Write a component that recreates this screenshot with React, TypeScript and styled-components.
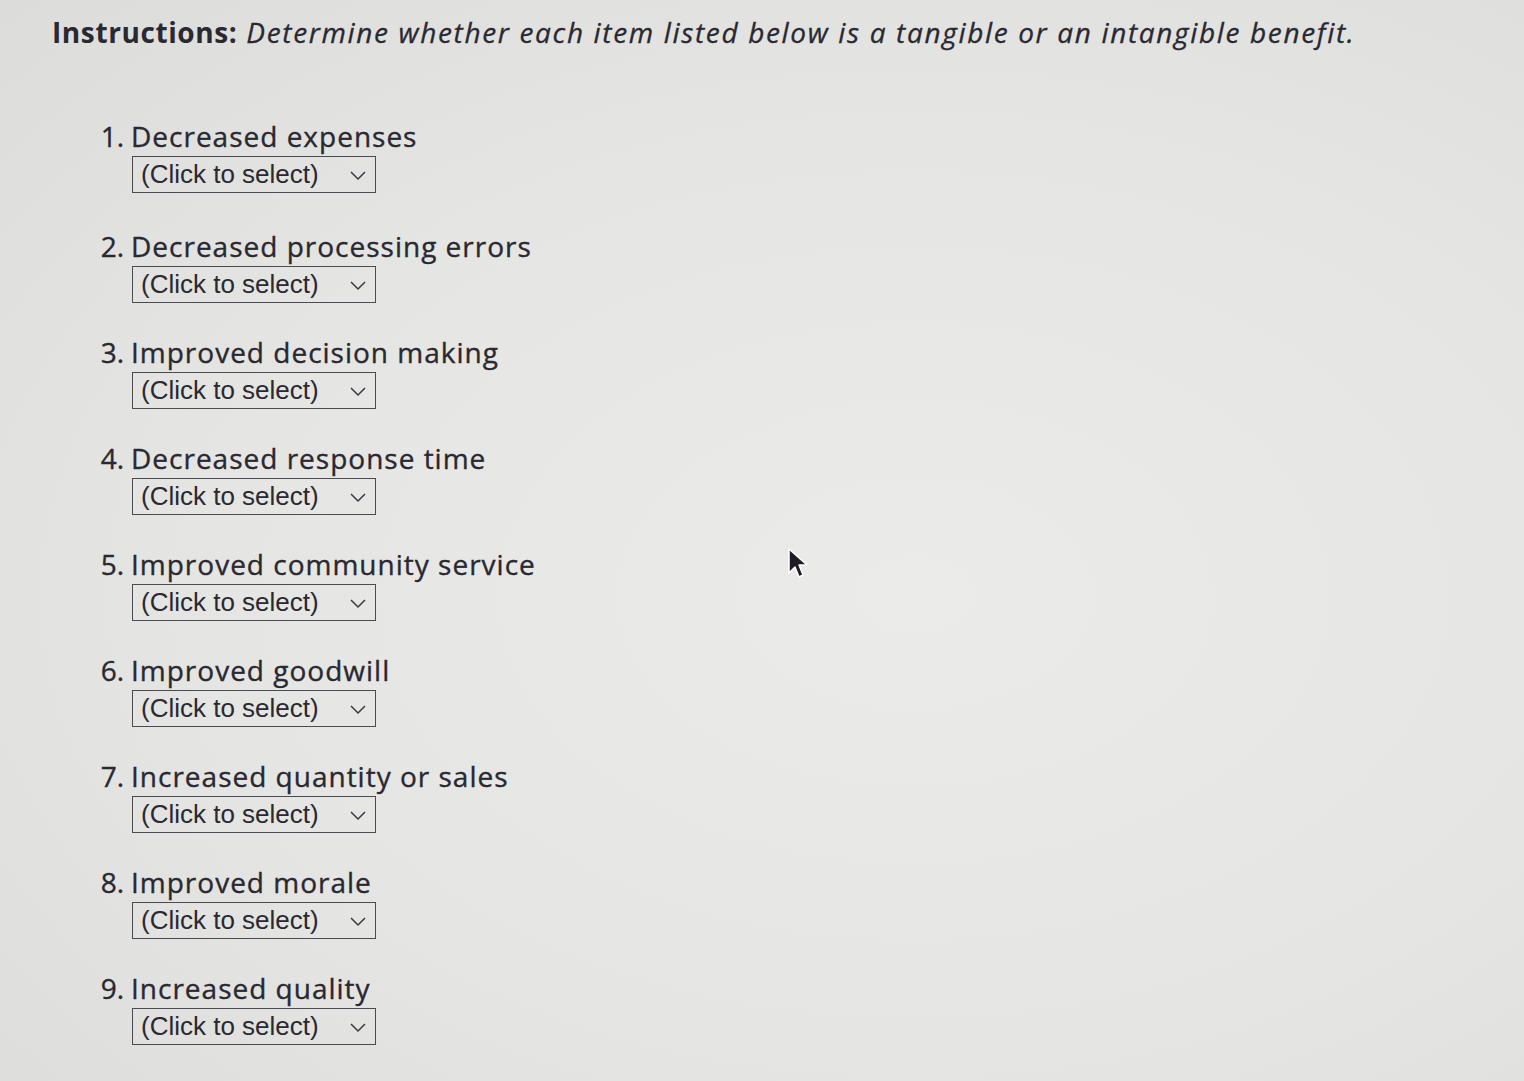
import styled, { createGlobalStyle } from "styled-components";

const GlobalStyle = createGlobalStyle`
    html, body {
        margin: 0;
        padding: 0;
    }
    body {
        background: #e4e4e2;
        font-family: "Open Sans", Lato, sans-serif;
        color: #2a2830;
    }
`;

const Page = styled.div`
    position: relative;
    width: 1524px;
    height: 1081px;
    box-sizing: border-box;
    padding: 15px 0 0 52px;
    background: radial-gradient(ellipse at 60% 55%, #ebebe9 0%, #e5e5e3 55%, #dcdcda 100%);
    overflow: hidden;
`;

const Title = styled.h1`
    margin: 0;
    font-size: 28px;
    line-height: 34px;
    font-weight: 400;
    white-space: nowrap;
    letter-spacing: 1.65px;
    -webkit-text-stroke: 0.3px #2a2830;
    b {
        font-weight: 700;
        letter-spacing: 0.6px;
        -webkit-text-stroke: 0;
    }
    i {
        font-style: italic;
    }
`;

const List = styled.ol`
    list-style: none;
    margin: 70px 0 0 0;
    padding: 0;
    display: flex;
    flex-direction: column;
    gap: 32px;
`;

const Item = styled.li`
    display: flex;
    flex-direction: column;
    gap: 3px;
    &:first-child {
        margin-bottom: 4px;
    }
`;

const Label = styled.div`
    display: flex;
    font-size: 28px;
    line-height: 34px;
    letter-spacing: 1px;
    -webkit-text-stroke: 0.35px #2a2830;
`;

const Num = styled.span`
    width: 79px;
    padding-right: 7px;
    box-sizing: border-box;
    text-align: right;
    letter-spacing: 0;
`;

const SelectBox = styled.div`
    margin-left: 80px;
    width: 244px;
    height: 37px;
    box-sizing: border-box;
    border: 1.5px solid #4d4b52;
    display: flex;
    align-items: center;
    justify-content: space-between;
    padding: 0 8px 0 8px;
    font-family: "Liberation Sans", Arial, sans-serif;
    font-size: 26px;
    color: #2a2830;
    cursor: pointer;
`;

const Chevron = styled.svg`
    width: 18px;
    height: 12px;
`;

const Cursor = styled.svg`
    position: absolute;
    left: 787px;
    top: 547px;
    width: 22px;
    height: 34px;
`;

const items = [
    "Decreased expenses",
    "Decreased processing errors",
    "Improved decision making",
    "Decreased response time",
    "Improved community service",
    "Improved goodwill",
    "Increased quantity or sales",
    "Improved morale",
    "Increased quality",
];

function App() {
    return (
        <Page>
            <GlobalStyle />
            <Title>
                <b>Instructions:</b> <i>Determine whether each item listed below is a tangible or an intangible benefit.</i>
            </Title>
            <List>
                {items.map((text, i) => (
                    <Item key={text}>
                        <Label>
                            <Num>{i + 1}.</Num>
                            <span>{text}</span>
                        </Label>
                        <SelectBox>
                            <span>(Click to select)</span>
                            <Chevron viewBox="0 0 18 12">
                                <path d="M2 3 L9 10 L16 3" fill="none" stroke="#3a3840" strokeWidth="1.5" />
                            </Chevron>
                        </SelectBox>
                    </Item>
                ))}
            </List>
            <Cursor viewBox="0 0 22 34">
                <path d="M2 2 L2 26 L8 20 L12 30 L16 28 L12 18 L20 18 Z" fill="#1e1c22" stroke="#fff" strokeWidth="1.5" strokeLinejoin="round" />
            </Cursor>
        </Page>
    );
}

export default App;
